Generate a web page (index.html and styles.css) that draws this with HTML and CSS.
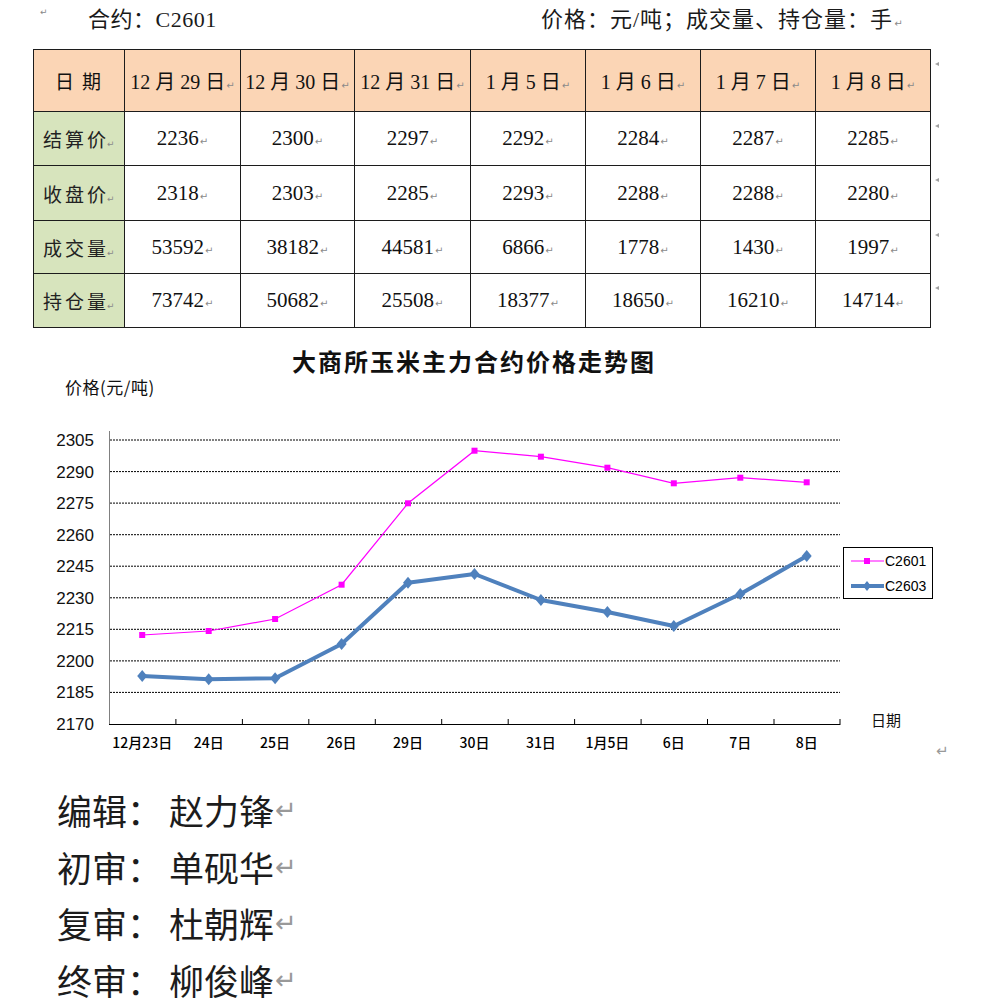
FILE: index.html
```html
<!DOCTYPE html>
<html lang="zh-CN">
<head>
<meta charset="utf-8">
<title>大商所玉米主力合约</title>
<link rel="stylesheet" href="styles.css">
</head>
<body>
<div class="page">
  <div class="topline">
    <div class="top-left">
      <span class="pm-tiny">↵</span>
      <span class="contract">合约：C2601</span>
    </div>
    <div class="units">价格：元/吨；成交量、持仓量：手<span class="pm">↵</span></div>
  </div>

  <table class="quotes">
    <colgroup>
      <col class="c-label"><col class="c1"><col class="c2"><col class="c3"><col class="c4"><col class="c5"><col class="c6"><col class="c7"><col class="c-end">
    </colgroup>
    <tr class="head">
      <th class="hlabel">日期</th>
      <th>12 月 29 日<span class="pm">↵</span></th>
      <th>12 月 30 日<span class="pm">↵</span></th>
      <th>12 月 31 日<span class="pm">↵</span></th>
      <th>1 月 5 日<span class="pm">↵</span></th>
      <th>1 月 6 日<span class="pm">↵</span></th>
      <th>1 月 7 日<span class="pm">↵</span></th>
      <th>1 月 8 日<span class="pm">↵</span></th>
      <td class="eor"><span class="eor-mark"></span></td>
    </tr>
    <tr class="r1">
      <th class="rlabel"><span class="lbl">结算价</span><span class="pm">↵</span></th>
      <td>2236<span class="pm">↵</span></td><td>2300<span class="pm">↵</span></td><td>2297<span class="pm">↵</span></td><td>2292<span class="pm">↵</span></td><td>2284<span class="pm">↵</span></td><td>2287<span class="pm">↵</span></td><td>2285<span class="pm">↵</span></td>
      <td class="eor"><span class="eor-mark"></span></td>
    </tr>
    <tr class="r2">
      <th class="rlabel"><span class="lbl">收盘价</span><span class="pm">↵</span></th>
      <td>2318<span class="pm">↵</span></td><td>2303<span class="pm">↵</span></td><td>2285<span class="pm">↵</span></td><td>2293<span class="pm">↵</span></td><td>2288<span class="pm">↵</span></td><td>2288<span class="pm">↵</span></td><td>2280<span class="pm">↵</span></td>
      <td class="eor"><span class="eor-mark"></span></td>
    </tr>
    <tr class="r3">
      <th class="rlabel"><span class="lbl">成交量</span><span class="pm">↵</span></th>
      <td>53592<span class="pm">↵</span></td><td>38182<span class="pm">↵</span></td><td>44581<span class="pm">↵</span></td><td>6866<span class="pm">↵</span></td><td>1778<span class="pm">↵</span></td><td>1430<span class="pm">↵</span></td><td>1997<span class="pm">↵</span></td>
      <td class="eor"><span class="eor-mark"></span></td>
    </tr>
    <tr class="r4">
      <th class="rlabel"><span class="lbl">持仓量</span><span class="pm">↵</span></th>
      <td>73742<span class="pm">↵</span></td><td>50682<span class="pm">↵</span></td><td>25508<span class="pm">↵</span></td><td>18377<span class="pm">↵</span></td><td>18650<span class="pm">↵</span></td><td>16210<span class="pm">↵</span></td><td>14714<span class="pm">↵</span></td>
      <td class="eor"><span class="eor-mark"></span></td>
    </tr>
  </table>

  <svg class="chart" viewBox="0 330 1002 440" width="1002" height="440" xmlns="http://www.w3.org/2000/svg">
    <text class="ch-title" x="474" y="371" text-anchor="middle">大商所玉米主力合约价格走势图</text>
    <text class="ch-ylab" x="65" y="394">价格(元/吨)</text>

    <g class="grid">
      <line x1="110" y1="440" x2="840" y2="440"/>
      <line x1="110" y1="471.6" x2="840" y2="471.6"/>
      <line x1="110" y1="503.1" x2="840" y2="503.1"/>
      <line x1="110" y1="534.7" x2="840" y2="534.7"/>
      <line x1="110" y1="566.2" x2="840" y2="566.2"/>
      <line x1="110" y1="597.8" x2="840" y2="597.8"/>
      <line x1="110" y1="629.3" x2="840" y2="629.3"/>
      <line x1="110" y1="660.9" x2="840" y2="660.9"/>
      <line x1="110" y1="692.4" x2="840" y2="692.4"/>
    </g>

    <g class="yticks" text-anchor="end">
      <text x="94" y="446">2305</text>
      <text x="94" y="477.6">2290</text>
      <text x="94" y="509.1">2275</text>
      <text x="94" y="540.7">2260</text>
      <text x="94" y="572.2">2245</text>
      <text x="94" y="603.8">2230</text>
      <text x="94" y="635.3">2215</text>
      <text x="94" y="666.9">2200</text>
      <text x="94" y="698.4">2185</text>
      <text x="94" y="730">2170</text>
    </g>

    <line class="yaxis" x1="109.5" y1="431" x2="109.5" y2="724"/>
    <line class="xaxis" x1="109" y1="724.5" x2="840.5" y2="724.5"/>
    <g class="xtick">
      <line x1="175.9" y1="719" x2="175.9" y2="724"/>
      <line x1="242.4" y1="719" x2="242.4" y2="724"/>
      <line x1="308.8" y1="719" x2="308.8" y2="724"/>
      <line x1="375.3" y1="719" x2="375.3" y2="724"/>
      <line x1="441.7" y1="719" x2="441.7" y2="724"/>
      <line x1="508.2" y1="719" x2="508.2" y2="724"/>
      <line x1="574.6" y1="719" x2="574.6" y2="724"/>
      <line x1="641.1" y1="719" x2="641.1" y2="724"/>
      <line x1="707.5" y1="719" x2="707.5" y2="724"/>
      <line x1="774" y1="719" x2="774" y2="724"/>
      <line x1="840" y1="719" x2="840" y2="724"/>
    </g>

    <g class="xlabels" text-anchor="middle">
      <text x="142.2" y="748">12月23日</text>
      <text x="208.7" y="748">24日</text>
      <text x="275.1" y="748">25日</text>
      <text x="341.6" y="748">26日</text>
      <text x="408" y="748">29日</text>
      <text x="474.5" y="748">30日</text>
      <text x="540.9" y="748">31日</text>
      <text x="607.4" y="748">1月5日</text>
      <text x="673.8" y="748">6日</text>
      <text x="740.3" y="748">7日</text>
      <text x="806.7" y="748">8日</text>
    </g>
    <text class="ch-xlab" x="871" y="726">日期</text>

    <polyline class="s1" points="142.2,635 208.7,631 275.1,619 341.6,584.7 408,503.3 474.5,450.7 540.9,456.7 607.4,467.7 673.8,483.3 740.3,477.7 806.7,482.3"/>
    <g class="s1m">
      <rect x="139.2" y="632" width="6" height="6"/>
      <rect x="205.7" y="628" width="6" height="6"/>
      <rect x="272.1" y="616" width="6" height="6"/>
      <rect x="338.6" y="581.7" width="6" height="6"/>
      <rect x="405" y="500.3" width="6" height="6"/>
      <rect x="471.5" y="447.7" width="6" height="6"/>
      <rect x="537.9" y="453.7" width="6" height="6"/>
      <rect x="604.4" y="464.7" width="6" height="6"/>
      <rect x="670.8" y="480.3" width="6" height="6"/>
      <rect x="737.3" y="474.7" width="6" height="6"/>
      <rect x="803.7" y="479.3" width="6" height="6"/>
    </g>

    <polyline class="s2" points="142.2,676 208.7,679.3 275.1,678.3 341.6,644 408,582.7 474.5,574 540.9,600 607.4,612 673.8,626 740.3,594 806.7,556"/>
    <g class="s2m">
      <polygon points="142.2,670 147.2,676 142.2,682 137.2,676"/>
      <polygon points="208.7,673.3 213.7,679.3 208.7,685.3 203.7,679.3"/>
      <polygon points="275.1,672.3 280.1,678.3 275.1,684.3 270.1,678.3"/>
      <polygon points="341.6,638 346.6,644 341.6,650 336.6,644"/>
      <polygon points="408,576.7 413,582.7 408,588.7 403,582.7"/>
      <polygon points="474.5,568 479.5,574 474.5,580 469.5,574"/>
      <polygon points="540.9,594 545.9,600 540.9,606 535.9,600"/>
      <polygon points="607.4,606 612.4,612 607.4,618 602.4,612"/>
      <polygon points="673.8,620 678.8,626 673.8,632 668.8,626"/>
      <polygon points="740.3,588 745.3,594 740.3,600 735.3,594"/>
      <polygon points="806.7,550 811.7,556 806.7,562 801.7,556"/>
    </g>

    <rect class="legend" x="843.5" y="547.5" width="89" height="51"/>
    <line class="s1" x1="851" y1="561" x2="884" y2="561"/>
    <rect class="s1m" x="864" y="558" width="6" height="6"/>
    <text class="leg-text" x="885" y="566">C2601</text>
    <line class="s2" x1="851" y1="586" x2="884" y2="586"/>
    <polygon class="s2m" points="867,581 871,586 867,591 863,586"/>
    <text class="leg-text" x="885" y="591">C2603</text>

    <text class="ch-pm" x="936" y="756">↵</text>
  </svg>

  <div class="sign">
    <div class="sline"><span class="role">编辑：</span><span class="name">赵力锋</span><span class="pm-big">↵</span></div>
    <div class="sline"><span class="role">初审：</span><span class="name">单砚华</span><span class="pm-big">↵</span></div>
    <div class="sline"><span class="role">复审：</span><span class="name">杜朝辉</span><span class="pm-big">↵</span></div>
    <div class="sline"><span class="role">终审：</span><span class="name">柳俊峰</span><span class="pm-big">↵</span></div>
  </div>
</div>
</body>
</html>
```

FILE: styles.css
```css
html, body {
  margin: 0;
  padding: 0;
  background: #ffffff;
}

body {
  font-family: "Liberation Serif", "Noto Sans CJK SC", serif;
  color: #111;
}

.page {
  width: 1002px;
}

/* top line */
.topline {
  display: flex;
  align-items: center;
  height: 34px;
  padding-left: 40px;
  font-size: 22px;
  color: #1a1a1a;
}

.top-left {
  width: 501px;
  display: flex;
  align-items: center;
}

.pm-tiny {
  font-family: "DejaVu Sans", sans-serif;
  font-size: 9px;
  color: #888;
  align-self: flex-start;
  margin-top: 6px;
  width: 48px;
}

.contract {
  letter-spacing: 0.5px;
}

.units {
  letter-spacing: 1px;
}

.pm {
  font-family: "DejaVu Sans", sans-serif;
  font-size: 10px;
  color: #8a8a8a;
  letter-spacing: 0;
  margin-left: 1px;
}

/* table */
.quotes {
  margin-top: 15px;
  margin-left: 33px;
  border-collapse: collapse;
  table-layout: fixed;
  width: 909px;
}

.c-label { width: 91px; }
.c1 { width: 116px; }
.c2 { width: 114px; }
.c3 { width: 116px; }
.c4 { width: 115px; }
.c5 { width: 115px; }
.c6 { width: 115px; }
.c7 { width: 115px; }
.c-end { width: 12px; }

.quotes th,
.quotes td {
  border: 1px solid #1c1c1c;
  padding: 0;
  text-align: center;
  font-weight: normal;
  font-size: 20px;
  color: #111;
  white-space: nowrap;
}

.quotes .eor {
  border: none;
  vertical-align: top;
  text-align: left;
  padding-left: 4px;
}

.eor-mark {
  display: block;
  width: 0;
  height: 0;
  margin-top: 12px;
  border-top: 2px solid transparent;
  border-bottom: 2px solid transparent;
  border-right: 4px solid #a0a0a0;
}

.head th {
  background: #fbd5b5;
  height: 61px;
  font-size: 20px;
}

.head .hlabel {
  letter-spacing: 8px;
  font-size: 19px;
  text-indent: 6px;
}

.rlabel {
  background: #d7e4bd;
}

.quotes th.rlabel {
  text-align: left;
  padding-left: 9px;
  font-size: 19px;
  color: #222;
  overflow: hidden;
}

.lbl {
  letter-spacing: 3px;
}

.rlabel .pm {
  margin-left: -2px;
  font-size: 9px;
}

.r1 td, .r1 th { height: 53px; }
.r2 td, .r2 th { height: 54px; }
.r3 td, .r3 th { height: 52px; }
.r4 td, .r4 th { height: 53px; }

.quotes td {
  font-size: 21px;
}

/* chart */
.chart {
  display: block;
  margin-top: 2px;
}

.ch-title {
  font-family: "Noto Sans CJK SC", sans-serif;
  font-weight: 700;
  font-size: 24px;
  letter-spacing: 2px;
  fill: #111;
}

.ch-ylab {
  font-family: "Noto Sans CJK SC", sans-serif;
  font-size: 17px;
  letter-spacing: 0.5px;
  fill: #111;
}

.ch-xlab {
  font-family: "Noto Sans CJK SC", sans-serif;
  font-size: 15px;
  fill: #111;
}

.grid line {
  stroke: #000;
  stroke-width: 1;
  stroke-dasharray: 2 1;
}

.yticks text {
  font-family: "Liberation Sans", sans-serif;
  font-size: 17px;
  fill: #111;
}

.yaxis {
  stroke: #808080;
  stroke-width: 1;
}

.xaxis,
.xtick line {
  stroke: #000;
  stroke-width: 1;
}

.xlabels text {
  font-family: "Noto Sans CJK SC", sans-serif;
  font-size: 14px;
  font-weight: 500;
  fill: #000;
}

.s1 {
  fill: none;
  stroke: #ff00ff;
  stroke-width: 1.2;
}

.s1m,
.s1m rect {
  fill: #ff00ff;
}

.s2 {
  fill: none;
  stroke: #4f81bd;
  stroke-width: 4;
  stroke-linejoin: round;
}

.s2m,
.s2m polygon {
  fill: #4f81bd;
}

.legend {
  fill: #fff;
  stroke: #000;
  stroke-width: 1;
}

.leg-text {
  font-family: "Liberation Sans", sans-serif;
  font-size: 14px;
  fill: #000;
}

.ch-pm {
  font-family: "DejaVu Sans", sans-serif;
  font-size: 15px;
  fill: #999;
}

/* signatures */
.sign {
  padding-top: 12px;
  padding-left: 57px;
  font-family: "Noto Sans CJK SC", sans-serif;
  font-size: 35px;
  color: #1c1c1c;
}

.sline {
  height: 56.7px;
  line-height: 56.7px;
  display: flex;
  align-items: center;
}

.name {
  margin-left: 7px;
}

.pm-big {
  font-family: "DejaVu Sans", sans-serif;
  font-size: 26px;
  color: #999;
  margin-left: 1px;
}
```
